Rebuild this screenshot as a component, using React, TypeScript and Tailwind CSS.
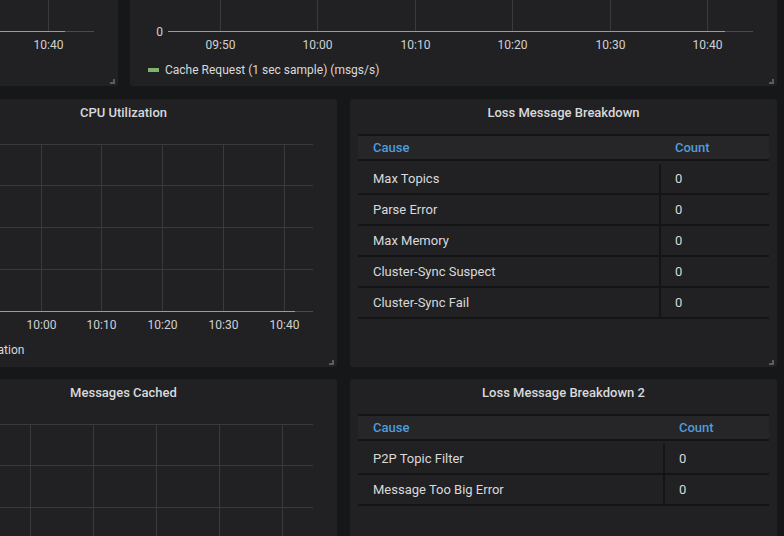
import React from "react";

type Tick = { x: number; label?: string };

type ChartProps = {
  width: number;
  height: number;
  top: number;
  axisY: number;
  hLines: number[];
  ticks: Tick[];
  axisEnd: number;
  lineEnd: number;
  labelY: number;
  yZero?: boolean;
  showSeries?: boolean;
};

// plain time-series grid, drawn like the old flot graphs
const Chart = ({ width, height, top, axisY, hLines, ticks, axisEnd, lineEnd, labelY, yZero, showSeries = true }: ChartProps) => (
  <svg width={width} height={height} className="block" style={{ fontFamily: "Roboto, 'Liberation Sans', sans-serif" }}>
    {hLines.map((y) => (
      <line key={y} x1={0} x2={axisEnd} y1={y + 0.5} y2={y + 0.5} stroke="#3a3a3e" />
    ))}
    {ticks.map((t) => (
      <line key={t.x} x1={t.x + 0.5} x2={t.x + 0.5} y1={top} y2={axisY} stroke="#3a3a3e" />
    ))}
    {showSeries && (
      <>
        <line x1={38} x2={axisEnd} y1={axisY + 0.5} y2={axisY + 0.5} stroke="#4a4a4e" />
        <line x1={38} x2={lineEnd} y1={axisY + 0.5} y2={axisY + 0.5} stroke="#7eb26d" strokeWidth={1.2} />
      </>
    )}
    {yZero && (
      <text x={33} y={axisY + 4.5} textAnchor="end" fontSize={12} fill="#d0d1d2">
        0
      </text>
    )}
    {ticks.map((t) =>
      t.label ? (
        <text key={t.label} x={t.x + 0.5} y={labelY} textAnchor="middle" fontSize={12} fill="#d0d1d2">
          {t.label}
        </text>
      ) : null
    )}
  </svg>
);

const ResizeHandle = () => (
  <svg width={5} height={5} className="absolute bottom-[2px] right-[3px]">
    <path d="M5 0 V5 H0 V3 H3 V0 Z" fill="#5b5b60" />
  </svg>
);

const Legend = ({ label }: { label: string }) => (
  <div className="flex h-[16px] items-center pl-[18px] text-[12px] text-[#d8d9da]">
    <span className="mr-[6px] h-[4px] w-[11px] bg-[#7eb26d]" />
    <span>{label}</span>
  </div>
);

const PanelTitle = ({ title }: { title: string }) => (
  <div className="flex h-[28px] items-center justify-center text-[13px] font-medium text-[#d8d9da]">{title}</div>
);

type Row = { cause: string; count: number };

const LossTable = ({ rows, causeWidth }: { rows: Row[]; causeWidth: string }) => (
  <div className="mx-2 mt-[7px] text-[13px]">
    <div className="flex h-[27px] items-center border-y-2 border-[#141416] bg-[#262629] font-medium text-[#4f9ddc]">
      <div className={`${causeWidth} pl-[15px]`}>Cause</div>
      <div className="pl-[16px]">Count</div>
    </div>
    <div className="mt-[3px]">
      {rows.map((r) => (
        <div key={r.cause} className="flex h-[31px] border-b-2 border-[#141416] text-[#d8d9da]">
          <div className={`${causeWidth} flex items-center pl-[15px]`}>{r.cause}</div>
          <div className="flex flex-1 items-center border-l-2 border-[#141416] pl-[14px]">{r.count}</div>
        </div>
      ))}
    </div>
  </div>
);

const topTicks: Tick[] = [
  { x: 90, label: "09:50" },
  { x: 187, label: "10:00" },
  { x: 285, label: "10:10" },
  { x: 382, label: "10:20" },
  { x: 480, label: "10:30" },
  { x: 577, label: "10:40" },
];

// ticks left of the screen edge keep their lines only
const cpuTicks: Tick[] = [
  { x: 9 },
  { x: 70 },
  { x: 131, label: "10:00" },
  { x: 191, label: "10:10" },
  { x: 252, label: "10:20" },
  { x: 313, label: "10:30" },
  { x: 374, label: "10:40" },
];

const cachedTicks: Tick[] = [{ x: 57 }, { x: 120 }, { x: 183 }, { x: 246 }, { x: 309 }, { x: 372 }];

export default function App() {
  return (
    <div className="h-[536px] w-[784px] overflow-hidden bg-[#161719] font-['Roboto','Liberation_Sans',sans-serif]">
      <div className="ml-[-90px] flex w-[867px] flex-col">
        {/* top row, scrolled past its titles */}
        <div className="flex h-[86px] gap-[12px]">
          <div className="relative w-[208px] rounded-b-[3px] bg-[#212124]">
            <Chart
              width={208}
              height={56}
              top={0}
              axisY={31}
              hLines={[]}
              ticks={[{ x: 41 }, { x: 138, label: "10:40" }]}
              axisEnd={184}
              lineEnd={155}
              labelY={49}
            />
            <ResizeHandle />
          </div>
          <div className="relative w-[647px] rounded-b-[3px] bg-[#212124]">
            <Chart width={647} height={56} top={0} axisY={31} hLines={[]} ticks={topTicks} axisEnd={623} lineEnd={595} labelY={49} yZero />
            <div className="mt-[6px]">
              <Legend label="Cache Request (1 sec sample) (msgs/s)" />
            </div>
            <ResizeHandle />
          </div>
        </div>

        <div className="mt-[13px] flex h-[268px] gap-[13px]">
          <div className="relative w-[427px] rounded-[3px] bg-[#212124]">
            <PanelTitle title="CPU Utilization" />
            <Chart
              width={427}
              height={212}
              top={17}
              axisY={184}
              hLines={[17, 58, 100, 142]}
              ticks={cpuTicks}
              axisEnd={403}
              lineEnd={385}
              labelY={202}
            />
            <div className="mt-[3px]">
              <Legend label="CPU Utilization" />
            </div>
            <ResizeHandle />
          </div>
          <div className="relative w-[427px] rounded-[3px] bg-[#212124]">
            <PanelTitle title="Loss Message Breakdown" />
            <LossTable
              causeWidth="w-[301px]"
              rows={[
                { cause: "Max Topics", count: 0 },
                { cause: "Parse Error", count: 0 },
                { cause: "Max Memory", count: 0 },
                { cause: "Cluster-Sync Suspect", count: 0 },
                { cause: "Cluster-Sync Fail", count: 0 },
              ]}
            />
            <ResizeHandle />
          </div>
        </div>

        <div className="mt-[12px] flex h-[268px] gap-[13px]">
          <div className="relative w-[427px] rounded-[3px] bg-[#212124]">
            <PanelTitle title="Messages Cached" />
            <Chart
              width={427}
              height={212}
              top={17}
              axisY={184}
              hLines={[17, 58, 100, 142]}
              ticks={cachedTicks}
              axisEnd={403}
              lineEnd={385}
              labelY={202}
              showSeries={false}
            />
          </div>
          <div className="relative w-[427px] rounded-[3px] bg-[#212124]">
            <PanelTitle title="Loss Message Breakdown 2" />
            <LossTable
              causeWidth="w-[305px]"
              rows={[
                { cause: "P2P Topic Filter", count: 0 },
                { cause: "Message Too Big Error", count: 0 },
              ]}
            />
          </div>
        </div>
      </div>
    </div>
  );
}
